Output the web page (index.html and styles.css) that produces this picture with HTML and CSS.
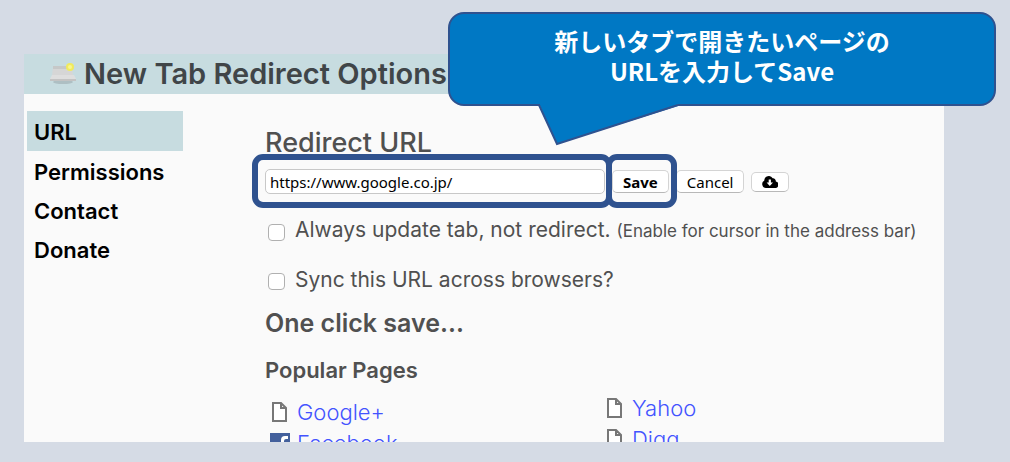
FILE: index.html
```html
<!DOCTYPE html>
<html lang="ja">
<head>
    <meta charset="UTF-8">
    <meta name="viewport" content="width=device-width, initial-scale=1.0">
    <title>New Tab Redirect Options</title>
    <link rel="stylesheet" href="styles.css">
</head>
<body>
    <div class="panel">
        <header class="header">
            <svg class="logo" width="28" height="26" viewBox="0 0 28 26" aria-hidden="true">
                <ellipse cx="14" cy="21" rx="10" ry="2" fill="#aebfc3"/>
                <path d="M4 5h19l1 10H3z" fill="#d6d6d6"/>
                <path d="M4 5h19v3H4z" fill="#c6c8c8"/>
                <path d="M3 14h22l2 4v2H1v-2z" fill="#dedede"/>
                <path d="M1 18h26v2H1z" fill="#c3c3c3"/>
                <circle cx="21" cy="6" r="4" fill="#f0ea5e"/>
                <circle cx="21" cy="6" r="2" fill="#faf68c"/>
            </svg>
            <h1>New Tab Redirect Options</h1>
        </header>
        <div class="layout">
            <nav class="menu">
                <a class="active" href="#url">URL</a>
                <a href="#permissions">Permissions</a>
                <a href="#contact">Contact</a>
                <a href="#donate">Donate</a>
            </nav>
            <main class="content" id="url">
                <h2 class="url-title"><label for="redirect-url">Redirect URL</label></h2>
                <form class="url-form">
                    <div class="mark mark-url">
                        <input type="text" id="redirect-url" value="https://www.google.co.jp/">
                    </div>
                    <div class="mark mark-save">
                        <button type="button" class="btn btn-save">Save</button>
                    </div>
                    <button type="button" class="btn">Cancel</button>
                    <button type="button" class="btn btn-cloud" aria-label="Load from cloud">
                        <svg width="16" height="12" viewBox="0 0 16 12" aria-hidden="true">
                            <path d="M4 12a4 4 0 0 1-1.700-7.500A4.500 4.500 0 0 1 10.700 2.300 2.800 2.800 0 0 1 13.800 5.500 3.300 3.300 0 0 1 12.700 12z" fill="#000"/>
                            <path d="M6.700 3.500h2.200v3h2.100L7.800 10 4.600 6.500h2.100z" fill="#fff"/>
                        </svg>
                    </button>
                </form>
                <div class="option">
                    <input type="checkbox" id="always-update">
                    <label for="always-update">Always update tab, not redirect. <small>(Enable for cursor in the address bar)</small></label>
                </div>
                <div class="option">
                    <input type="checkbox" id="sync-url">
                    <label for="sync-url">Sync this URL across browsers?</label>
                </div>
                <h2>One click save...</h2>
                <h3>Popular Pages</h3>
                <div class="pages">
                    <ul class="pages-left">
                        <li>
                            <svg width="16" height="20" viewBox="0 0 16 20" aria-hidden="true"><path d="M1 1h8l5 5v13H1zM9 1v5h5" fill="#fff" stroke="#777" stroke-width="2"/></svg>
                            <a href="#google">Google+</a>
                        </li>
                        <li>
                            <svg class="facebook" width="20" height="20" viewBox="0 0 20 20" aria-hidden="true"><path d="M0 0h20v20H0z" fill="#43609c"/><path d="M11 20v-8H8V9h3V7q0-4 4-4h3v3h-2q-2 0-2 2v1h4l-1 3h-3v8z" fill="#fff"/></svg>
                            <a href="#facebook">Facebook</a>
                        </li>
                    </ul>
                    <ul>
                        <li>
                            <svg width="16" height="20" viewBox="0 0 16 20" aria-hidden="true"><path d="M1 1h8l5 5v13H1zM9 1v5h5" fill="#fff" stroke="#777" stroke-width="2"/></svg>
                            <a href="#yahoo">Yahoo</a>
                        </li>
                        <li>
                            <svg width="16" height="20" viewBox="0 0 16 20" aria-hidden="true"><path d="M1 1h8l5 5v13H1zM9 1v5h5" fill="#fff" stroke="#777" stroke-width="2"/></svg>
                            <a href="#digg">Digg</a>
                        </li>
                    </ul>
                </div>
            </main>
        </div>
    </div>
    <div class="callout">
        <p>新しいタブで開きたいページの<br>URLを入力してSave</p>
        <svg class="callout-tail" width="142" height="44" viewBox="0 0 142 44" aria-hidden="true">
            <path d="M2 0V3L19 41 140 3V0z" fill="#0078c4"/>
            <path d="M1 2l18 39L140 2" fill="none" stroke="#2f528f" stroke-width="2"/>
        </svg>
    </div>
</body>
</html>
```

FILE: styles.css
```css
* {
    box-sizing: border-box;
}
body {
    display: flex;
    height: 100vh;
    margin: 0;
    padding: 54px 66px 20px 24px;
    background-color: #d5dbe5;
    color: #505050;
    font-family: Inter, "Noto Sans CJK JP", sans-serif;
}
h1, h2, h3, p, ul {
    margin: 0;
    padding: 0;
}
.panel {
    flex: 1;
    overflow: hidden;
    background-color: #fafafa;
}
.header {
    display: flex;
    align-items: center;
    gap: 7px;
    height: 40px;
    padding-left: 25px;
    background-color: #c7dce0;
}
.header h1 {
    color: #404548;
    font-size: 29px;
    font-weight: 600;
    line-height: 38px;
    white-space: nowrap;
}
.layout {
    display: flex;
    gap: 82px;
    padding: 17px 0 0 3px;
}
.menu {
    display: flex;
    flex-direction: column;
    flex: 0 0 156px;
}
.menu a {
    height: 39px;
    padding: 2px 7px 0;
    color: #000;
    font-size: 22px;
    font-weight: 600;
    line-height: 39px;
    text-decoration: none;
}
.menu .active {
    height: 40px;
    background-color: #c7dce0;
}
.content {
    flex: 1;
    padding-top: 16px;
}
h2 {
    font-size: 25px;
    font-weight: 600;
    line-height: 32px;
}
.url-title {
    font-size: 27px;
    font-weight: 500;
}
h3 {
    margin-top: 18px;
    font-size: 22px;
    font-weight: 600;
    line-height: 26px;
}
.url-form {
    display: flex;
    align-items: center;
    gap: 7px;
    margin-top: 10px;
}
.url-form input {
    display: block;
    width: 340px;
    height: 25px;
    padding: 0 4px;
    border: 1px solid #c8c8c8;
    border-radius: 5px;
    background-color: #fff;
    color: #000;
    font: 15px "Noto Sans", sans-serif;
}
.btn {
    height: 23px;
    padding: 0 10px;
    border: 1px solid #d4d4d4;
    border-bottom-color: #b8b8b8;
    border-radius: 5px;
    background-color: #fff;
    color: #000;
    font: 15px/20px "Noto Sans", sans-serif;
}
.btn-save {
    display: block;
    font-weight: 700;
}
.btn-cloud {
    display: flex;
    align-items: center;
    height: 20px;
}
/* frames drawn round the steps to follow */
.mark {
    position: relative;
}
.mark::after {
    content: "";
    position: absolute;
    inset: -15px -7px -14px -13px;
    border: 6px solid #2f528f;
    border-radius: 11px;
    pointer-events: none;
}
.mark-save::after {
    inset: -16px -8px -15px -6px;
}
.option {
    display: flex;
    align-items: center;
    gap: 10px;
    height: 49px;
    padding-left: 3px;
    font-size: 21px;
    line-height: 28px;
    white-space: nowrap;
}
.url-form + .option {
    margin-top: 12px;
}
.option input {
    appearance: none;
    width: 17px;
    height: 17px;
    margin: 3px 0 0;
    border: 1px solid #b0b0b0;
    border-radius: 4px;
    background-color: #fff;
}
.option small {
    font-size: 17px;
}
.option + h2 {
    margin-top: 3px;
}
.pages {
    display: grid;
    grid-template-columns: 335px 1fr;
    margin-top: 9px;
    padding-left: 7px;
}
.pages ul {
    list-style: none;
}
.pages .pages-left {
    padding-top: 4px;
}
.pages li {
    display: flex;
    align-items: center;
    gap: 9px;
    height: 31px;
}
.pages svg {
    flex: none;
}
.pages .facebook {
    margin: 0 -2px;
}
.pages a {
    color: #4353ff;
    font-size: 22px;
    font-weight: 300;
    line-height: 28px;
    text-decoration: none;
}
.callout {
    position: absolute;
    top: 12px;
    right: 14px;
    width: 548px;
    padding: 12px 0 18px;
    border: 2px solid #2f528f;
    border-radius: 16px;
    background-color: #0078c4;
    color: #fff;
    font-family: "Noto Sans CJK JP", sans-serif;
    font-size: 24px;
    font-weight: 700;
    line-height: 30px;
    text-align: center;
}
.callout-tail {
    position: absolute;
    top: 100%;
    left: 88px;
    margin-top: -1px;
}
```
